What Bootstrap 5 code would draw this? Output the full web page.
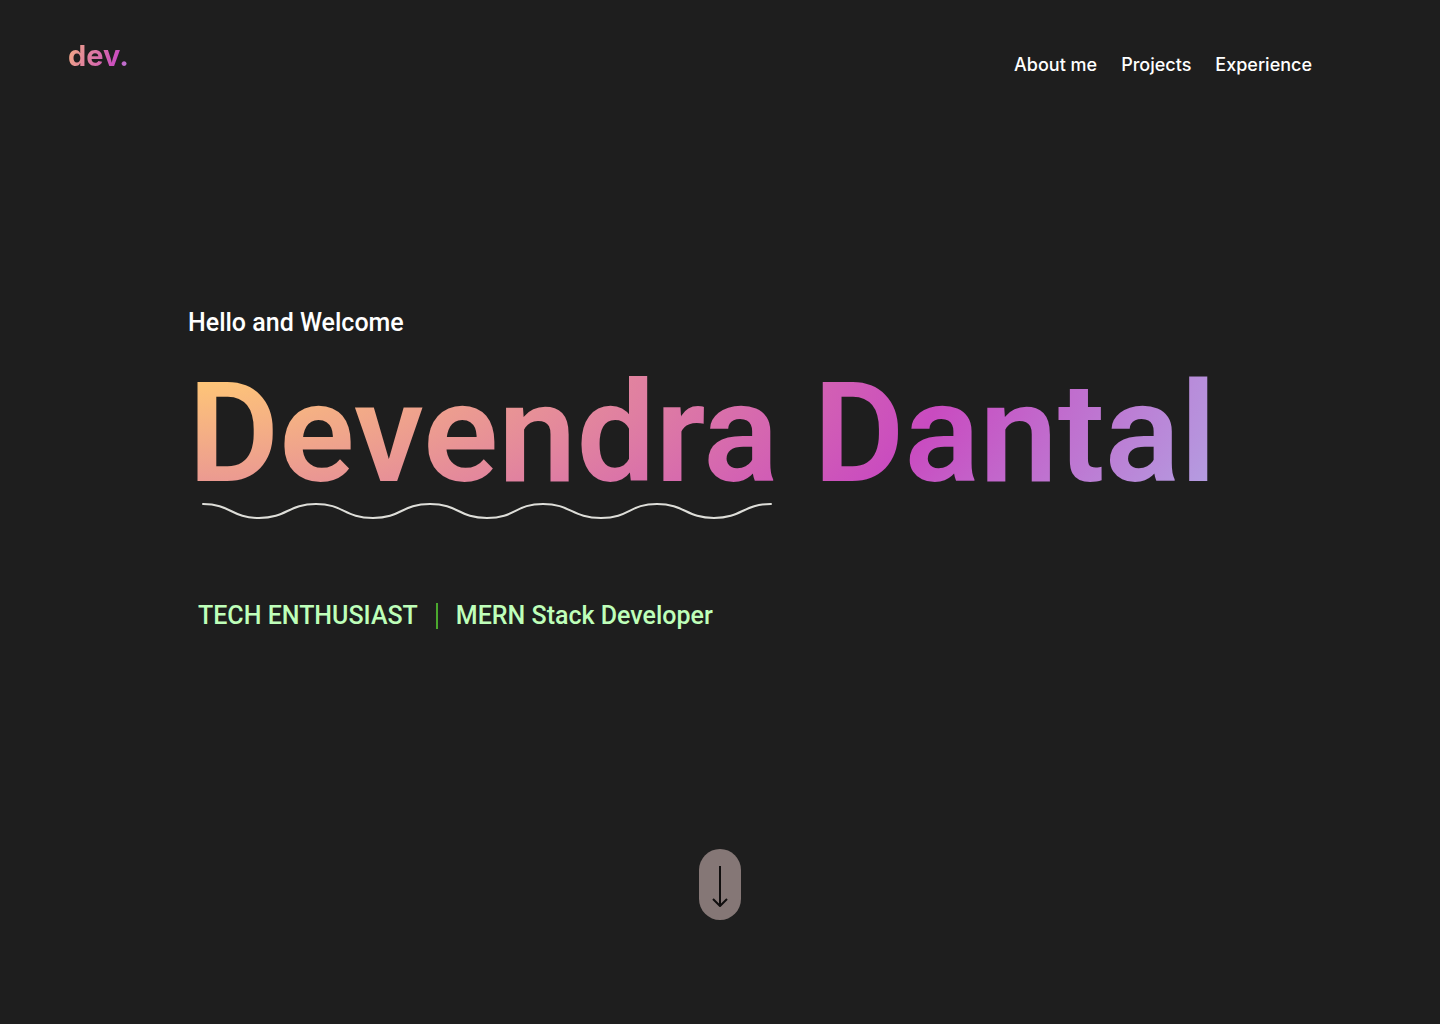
<!DOCTYPE html>
<html lang="en">
<head>
<meta charset="utf-8">
<meta name="viewport" content="width=device-width, initial-scale=1">
<title>Devendra Dantal</title>
<link href="https://cdn.jsdelivr.net/npm/bootstrap@5.3.0/dist/css/bootstrap.min.css" rel="stylesheet">
<style>
body{background:#1e1e1e;color:#fff;font-family:Roboto,"Liberation Sans",sans-serif}
.site-bar{padding:32px 128px 0 68px}
.brand-text,.hero-name{-webkit-background-clip:text;background-clip:text;color:transparent}
.brand-text{background-image:linear-gradient(110deg,#f6b37e 0%,#c94bc0 76%,#b79be0 100%);font:700 29px/48px Inter,"Liberation Sans",sans-serif;text-decoration:none}
.site-links{font:500 18px/24px Inter,"Liberation Sans",sans-serif;gap:24px;padding-top:21px}
.site-links a{color:#fff;text-decoration:none}
.hero{padding:227px 188px 0}
.hello{font-size:25px;line-height:32px;font-weight:500}
.hero-name{background-image:radial-gradient(112% 290% at 0 0,#ffc876 5%,#c94bc0 66%,#b3a0e2 94%);font-size:140px;line-height:164px;font-weight:600;margin:12px 0 0}
.wave{width:572px;height:18px;margin:-13px 0 0 13px}
.roles{font-size:25px;line-height:32px;font-weight:500;color:#beffb9;gap:18px;padding:80px 0 0 10px}
.bar{width:2px;height:26px;background:#4ba82e}
.scroll-btn{width:42px;height:71px;border:0;border-radius:21px;background:#857776;padding:0}
.scroll-area{padding:24px 0 104px}
</style>
</head>
<body class="min-vh-100 d-flex flex-column">
<header class="site-bar d-flex justify-content-between align-items-start">
<a href="#" class="brand-text">dev.</a>
<nav class="site-links d-flex" aria-label="Main"><a href="#about">About me</a><a href="#projects">Projects</a><a href="#experience">Experience</a></nav>
</header>
<main class="hero">
<p class="hello mb-0">Hello and Welcome</p>
<h1 class="hero-name d-table">Devendra Dantal</h1>
<svg class="wave d-block" viewBox="0 0 572 18" fill="none" stroke="#deded9" stroke-width="2" stroke-linecap="round" aria-hidden="true"><path d="M2 2C30 2 30 16 58 16S87 2 115 2S143 16 172 16S200 2 229 2S257 16 286 16S314 2 342 2S371 16 400 16S428 2 456 2S485 16 513 16S542 2 570 2"/></svg>
<div class="roles d-flex align-items-center"><span>TECH ENTHUSIAST</span><span class="bar"></span><span>MERN Stack Developer</span></div>
</main>
<div class="scroll-area mt-auto d-flex justify-content-center">
<button type="button" class="scroll-btn d-flex justify-content-center" aria-label="Scroll down"><svg width="42" height="71" viewBox="0 0 42 71" fill="none" stroke="#100e0e" stroke-width="2" stroke-linejoin="round" aria-hidden="true"><path d="M21 17V57M14 50L21 57L28 50"/></svg></button>
</div>
<script src="https://cdn.jsdelivr.net/npm/bootstrap@5.3.0/dist/js/bootstrap.bundle.min.js"></script>
</body>
</html>
